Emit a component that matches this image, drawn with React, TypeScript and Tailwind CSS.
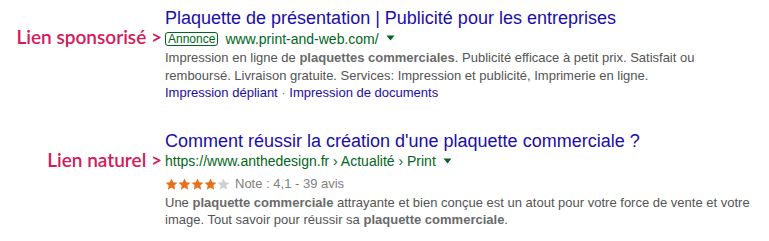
import React from "react";

const Star = ({ color }: { color: string }) => (
  <svg width="13" height="12" viewBox="0 0 24 23" className="block">
    <path
      d="M12 0.8l3.4 7.3 7.9 0.9-5.9 5.4 1.6 7.9L12 18.3l-7 4 1.6-7.9L0.7 9l7.9-0.9z"
      fill={color}
    />
  </svg>
);

const Caret = () => (
  <svg width="9" height="6" viewBox="0 0 9 6" className="inline-block ml-[7px] mb-[2px]">
    <path d="M0.5 0.5h8L4.5 5.5z" fill="#006621" />
  </svg>
);

const Label = ({ children }: { children: React.ReactNode }) => (
  <div
    className="text-right pr-[3px] mb-[4px] text-[19px] leading-[22px] text-[#d4195c] whitespace-nowrap font-semibold"
    style={{ fontFamily: "Lato, 'Open Sans', sans-serif" }}
  >
    {children}
  </div>
);

export default function App() {
  const arial = { fontFamily: "Arial, 'Liberation Sans', sans-serif" };
  return (
    <div className="w-[769px] h-[241px] bg-white overflow-hidden" style={arial}>
      <div className="grid grid-cols-[165px_1fr] pt-[7px]">
        {/* result 1 */}
        <div />
        <div className="text-[18px] leading-[22px] text-[#1a0dab] whitespace-nowrap">
          Plaquette de présentation | Publicité pour les entreprises
        </div>
        <div className="flex items-center justify-end h-[20px]">
          <Label>Lien sponsorisé &gt;</Label>
        </div>
        <div className="flex items-center h-[20px] text-[14px] text-[#006621] whitespace-nowrap">
          <span className="inline-flex items-center h-[14px] px-[2px] border border-[#006621] rounded-[3px] text-[12px] leading-[12px] mr-[7px]">
            Annonce
          </span>
          <span>www.print-and-web.com/</span>
          <Caret />
        </div>
        <div />
        <div className="text-[13px] leading-[17.5px] text-[#545454]">
          <div className="whitespace-nowrap">
            Impression en ligne de <b className="text-[#6a6a6a]">plaquettes commerciales</b>. Publicité efficace à petit prix. Satisfait ou
          </div>
          <div className="whitespace-nowrap">
            remboursé. Livraison gratuite. Services: Impression et publicité, Imprimerie en ligne.
          </div>
          <div className="whitespace-nowrap text-[#1a0dab]">
            Impression dépliant <span className="text-[#808080]">·</span> Impression de documents
          </div>
        </div>

        {/* result 2 */}
        <div className="h-[28px]" />
        <div />
        <div />
        <div className="text-[18px] leading-[22px] text-[#1a0dab] whitespace-nowrap">
          Comment réussir la création d'une plaquette commerciale ?
        </div>
        <div className="flex items-center justify-end h-[20px]">
          <Label>Lien naturel &gt;</Label>
        </div>
        <div className="flex items-center h-[20px] text-[14px] text-[#006621] whitespace-nowrap">
          <span>https://www.anthedesign.fr › Actualité › Print</span>
          <Caret />
        </div>
        <div />
        <div className="flex items-center h-[20px] mt-[2px] text-[13px] text-[#808080] whitespace-nowrap">
          <span className="flex items-center mr-[5px]">
            <Star color="#e7711b" />
            <Star color="#e7711b" />
            <Star color="#e7711b" />
            <Star color="#e7711b" />
            <Star color="#d0d0d0" />
          </span>
          <span>Note : 4,1 - 39 avis</span>
        </div>
        <div />
        <div className="text-[13px] leading-[17.5px] text-[#545454]">
          <div className="whitespace-nowrap">
            Une <b className="text-[#6a6a6a]">plaquette commerciale</b> attrayante et bien conçue est un atout pour votre force de vente et votre
          </div>
          <div className="whitespace-nowrap">
            image. Tout savoir pour réussir sa <b className="text-[#6a6a6a]">plaquette commerciale</b>.
          </div>
        </div>
      </div>
    </div>
  );
}
